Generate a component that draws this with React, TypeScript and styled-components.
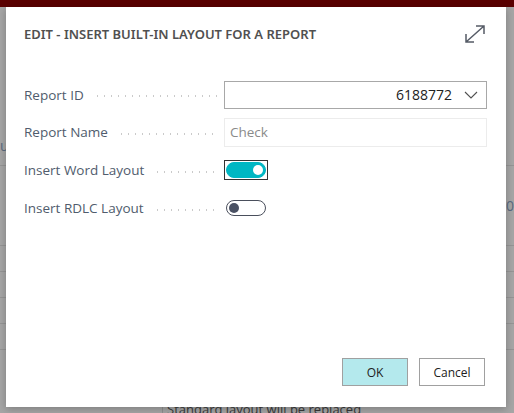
import React from "react";
import styled, { createGlobalStyle } from "styled-components";

const Global = createGlobalStyle`
  html, body { margin: 0; padding: 0; }
  body {
    width: 514px; height: 413px; overflow: hidden;
    background: #a6a6a6;
    font-family: "Open Sans", "Noto Sans", sans-serif;
  }
`;

const Page = styled.div`
  position: relative;
  width: 514px;
  height: 413px;
  overflow: hidden;
  background: #a6a6a6;
  display: flex;
  flex-direction: column;
`;

const TopBar = styled.div`
  height: 7px;
  background: #5a0000;
  flex: none;
`;

const BgRows = styled.div`
  display: flex;
  flex-direction: column;
  padding-top: 119px;
`;

const BgRow = styled.div<{ $h: number }>`
  height: ${(p) => p.$h}px;
  border-bottom: 1px solid #959595;
  box-sizing: border-box;
  display: flex;
  align-items: center;
  justify-content: space-between;
`;

const BgText = styled.span`
  color: #5a6a80;
  font-size: 14px;
`;

const BottomText = styled.div`
  position: absolute;
  left: 162px;
  top: 401px;
  font-size: 13px;
  line-height: 16px;
  color: #3a3a3a;
  border-left: 1px solid #909090;
  padding-left: 4px;
`;

const Dialog = styled.div`
  position: absolute;
  left: 6px;
  top: 7px;
  width: 500px;
  height: 400px;
  background: #ffffff;
  box-shadow: 0 2px 8px rgba(0, 0, 0, 0.25);
  display: flex;
  flex-direction: column;
  box-sizing: border-box;
  padding: 0 18px 0 18px;
`;

const Header = styled.div`
  display: flex;
  align-items: center;
  justify-content: space-between;
  height: 54px;
`;

const Title = styled.h1`
  margin: 0;
  font-family: "Noto Sans", sans-serif;
  font-weight: 600;
  font-size: 13px;
  color: #505050;
`;

const ExpandBtn = styled.div`
  width: 26px;
  height: 26px;
  display: flex;
  align-items: center;
  justify-content: center;
`;

const Form = styled.div`
  display: flex;
  flex-direction: column;
  padding-top: 15px;
`;

const Row = styled.div<{ $h: number }>`
  display: grid;
  grid-template-columns: 200px 263px;
  align-items: center;
  height: ${(p) => p.$h}px;
`;

const LabelCell = styled.div`
  display: flex;
  align-items: center;
  overflow: hidden;
  padding-right: 6px;
`;

const Label = styled.span`
  font-size: 13.5px;
  color: #505c6d;
  white-space: nowrap;
  flex: none;
`;

const Leader = styled.span`
  flex: 1;
  height: 2px;
  margin-left: 10px;
  margin-top: 3px;
  background-image: radial-gradient(circle, #cacaca 0.8px, transparent 1px);
  background-size: 7px 2px;
  background-repeat: repeat-x;
`;

const SelectBox = styled.div`
  height: 28px;
  box-sizing: border-box;
  border: 1px solid #a8a8a8;
  display: flex;
  align-items: center;
  justify-content: flex-end;
  padding-right: 8px;
  gap: 12px;
  font-size: 14px;
  color: #212121;
`;

const TextBox = styled.div`
  height: 29px;
  box-sizing: border-box;
  border: 1px solid #ececec;
  display: flex;
  align-items: center;
  padding-left: 5px;
  font-size: 13.5px;
  color: #8a8a8a;
`;

const ToggleWrap = styled.div<{ $focus?: boolean }>`
  width: 44px;
  height: 20px;
  box-sizing: border-box;
  border: 1px solid ${(p) => (p.$focus ? "#333333" : "transparent")};
  display: flex;
  align-items: center;
  justify-content: center;
`;

const Track = styled.div<{ $on: boolean }>`
  width: 40px;
  height: 16px;
  box-sizing: border-box;
  border-radius: 9px;
  border: 1px solid ${(p) => (p.$on ? "#00b7c3" : "#4a4f5c")};
  background: ${(p) => (p.$on ? "#00b7c3" : "#ffffff")};
  display: flex;
  align-items: center;
  justify-content: ${(p) => (p.$on ? "flex-end" : "flex-start")};
  padding: 0 2px;
`;

const Knob = styled.div<{ $on: boolean }>`
  width: 10px;
  height: 10px;
  border-radius: 50%;
  background: ${(p) => (p.$on ? "#ffffff" : "#4a5163")};
`;

const Spacer = styled.div`
  flex: 1;
`;

const Footer = styled.div`
  display: flex;
  justify-content: flex-end;
  gap: 11px;
  padding-bottom: 21px;
  padding-right: 3px;
`;

const Button = styled.button<{ $primary?: boolean }>`
  width: 66px;
  height: 28px;
  box-sizing: border-box;
  border: 1px solid #a0a0a0;
  background: ${(p) => (p.$primary ? "#b4e9ed" : "#ffffff")};
  font-family: "Open Sans", "Noto Sans", sans-serif;
  font-size: 12px;
  color: #212121;
  padding: 0;
`;

const Chevron = () => (
  <svg width="14" height="8" viewBox="0 0 14 8">
    <path d="M1 1 L7 7 L13 1" fill="none" stroke="#505050" strokeWidth="1.1" />
  </svg>
);

const ExpandIcon = () => (
  <svg width="24" height="22" viewBox="0 0 24 22">
    <path
      d="M3 19 L21 3 M13 3 H21 V11 M3 11 V19 H11"
      fill="none"
      stroke="#555b66"
      strokeWidth="1.5"
    />
  </svg>
);

const Field = ({ label, children, h }: { label: string; children: React.ReactNode; h: number }) => (
  <Row $h={h}>
    <LabelCell>
      <Label>{label}</Label>
      <Leader />
    </LabelCell>
    <div>{children}</div>
  </Row>
);

export default function App() {
  return (
    <>
      <Global />
      <Page>
        <TopBar />
        <BgRows>
          <BgRow $h={40}>
            <BgText>u</BgText>
          </BgRow>
          <BgRow $h={80}>
            <span />
            <BgText>0</BgText>
          </BgRow>
          <BgRow $h={26} />
          <BgRow $h={26} />
          <BgRow $h={26} />
          <BgRow $h={26} />
        </BgRows>
        <BottomText>Standard layout will be replaced</BottomText>
        <Dialog>
          <Header>
            <Title>EDIT - INSERT BUILT-IN LAYOUT FOR A REPORT</Title>
            <ExpandBtn>
              <ExpandIcon />
            </ExpandBtn>
          </Header>
          <Form>
            <Field label="Report ID" h={37}>
              <SelectBox>
                <span>6188772</span>
                <Chevron />
              </SelectBox>
            </Field>
            <Field label="Report Name" h={38}>
              <TextBox>Check</TextBox>
            </Field>
            <Field label="Insert Word Layout" h={38}>
              <ToggleWrap $focus>
                <Track $on>
                  <Knob $on />
                </Track>
              </ToggleWrap>
            </Field>
            <Field label="Insert RDLC Layout" h={38}>
              <ToggleWrap>
                <Track $on={false}>
                  <Knob $on={false} />
                </Track>
              </ToggleWrap>
            </Field>
          </Form>
          <Spacer />
          <Footer>
            <Button $primary>OK</Button>
            <Button>Cancel</Button>
          </Footer>
        </Dialog>
      </Page>
    </>
  );
}
